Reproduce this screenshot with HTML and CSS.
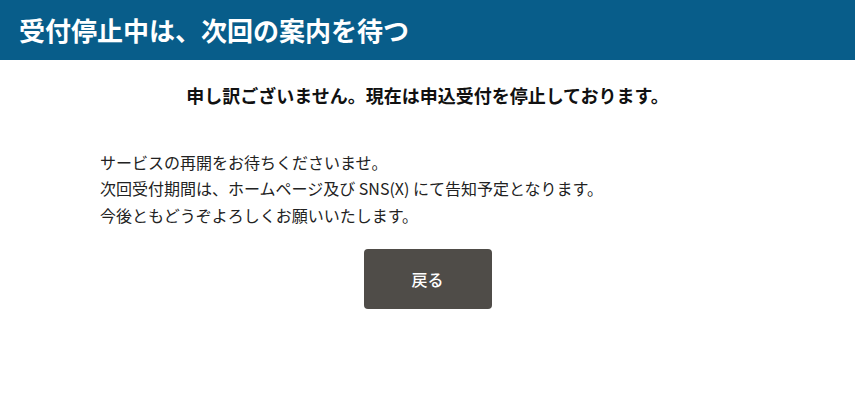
FILE: index.html
```html
<!DOCTYPE html>
<html lang="ja">
<head>
<meta charset="utf-8">
<title>受付停止中は、次回の案内を待つ</title>
<link rel="stylesheet" href="styles.css">
</head>
<body>
<header class="site-header">
  <h1 class="site-title">受付停止中は、次回の案内を待つ</h1>
</header>
<main class="content">
  <p class="lead">申し訳ございません。現在は申込受付を停止しております。</p>
  <div class="message">
    <p>サービスの再開をお待ちくださいませ。<br>次回受付期間は、ホームページ及び SNS(X) にて告知予定となります。<br>今後ともどうぞよろしくお願いいたします。</p>
  </div>
  <div class="actions">
    <a class="btn-back" href="#">戻る</a>
  </div>
</main>
</body>
</html>
```

FILE: styles.css
```css
* { box-sizing: border-box; }
html, body {
  margin: 0;
  padding: 0;
  background: #ffffff;
  font-family: "Noto Sans CJK JP", "Noto Sans", sans-serif;
  color: #222222;
}
.site-header {
  background: #085d8a;
  height: 60px;
  display: flex;
  align-items: center;
  padding: 0 19px;
}
.site-title {
  margin: 0;
  color: #ffffff;
  font-size: 26px;
  font-weight: 700;
  line-height: 1;
  letter-spacing: 0;
}
.content {
  padding-top: 21px;
}
.lead {
  margin: 0;
  text-align: center;
  font-size: 18px;
  font-weight: 700;
  line-height: 1.6;
  color: #111111;
}
.message {
  width: 655px;
  margin: 39px auto 0;
}
.message p {
  margin: 0;
  font-size: 16px;
  line-height: 26.5px;
}
.actions {
  display: flex;
  justify-content: center;
  margin-top: 21px;
}
.btn-back {
  width: 128px;
  height: 60px;
  display: flex;
  align-items: center;
  justify-content: center;
  background: #4f4c48;
  color: #ffffff;
  border-radius: 4px;
  text-decoration: none;
  font-size: 16px;
  font-weight: 500;
}
```
